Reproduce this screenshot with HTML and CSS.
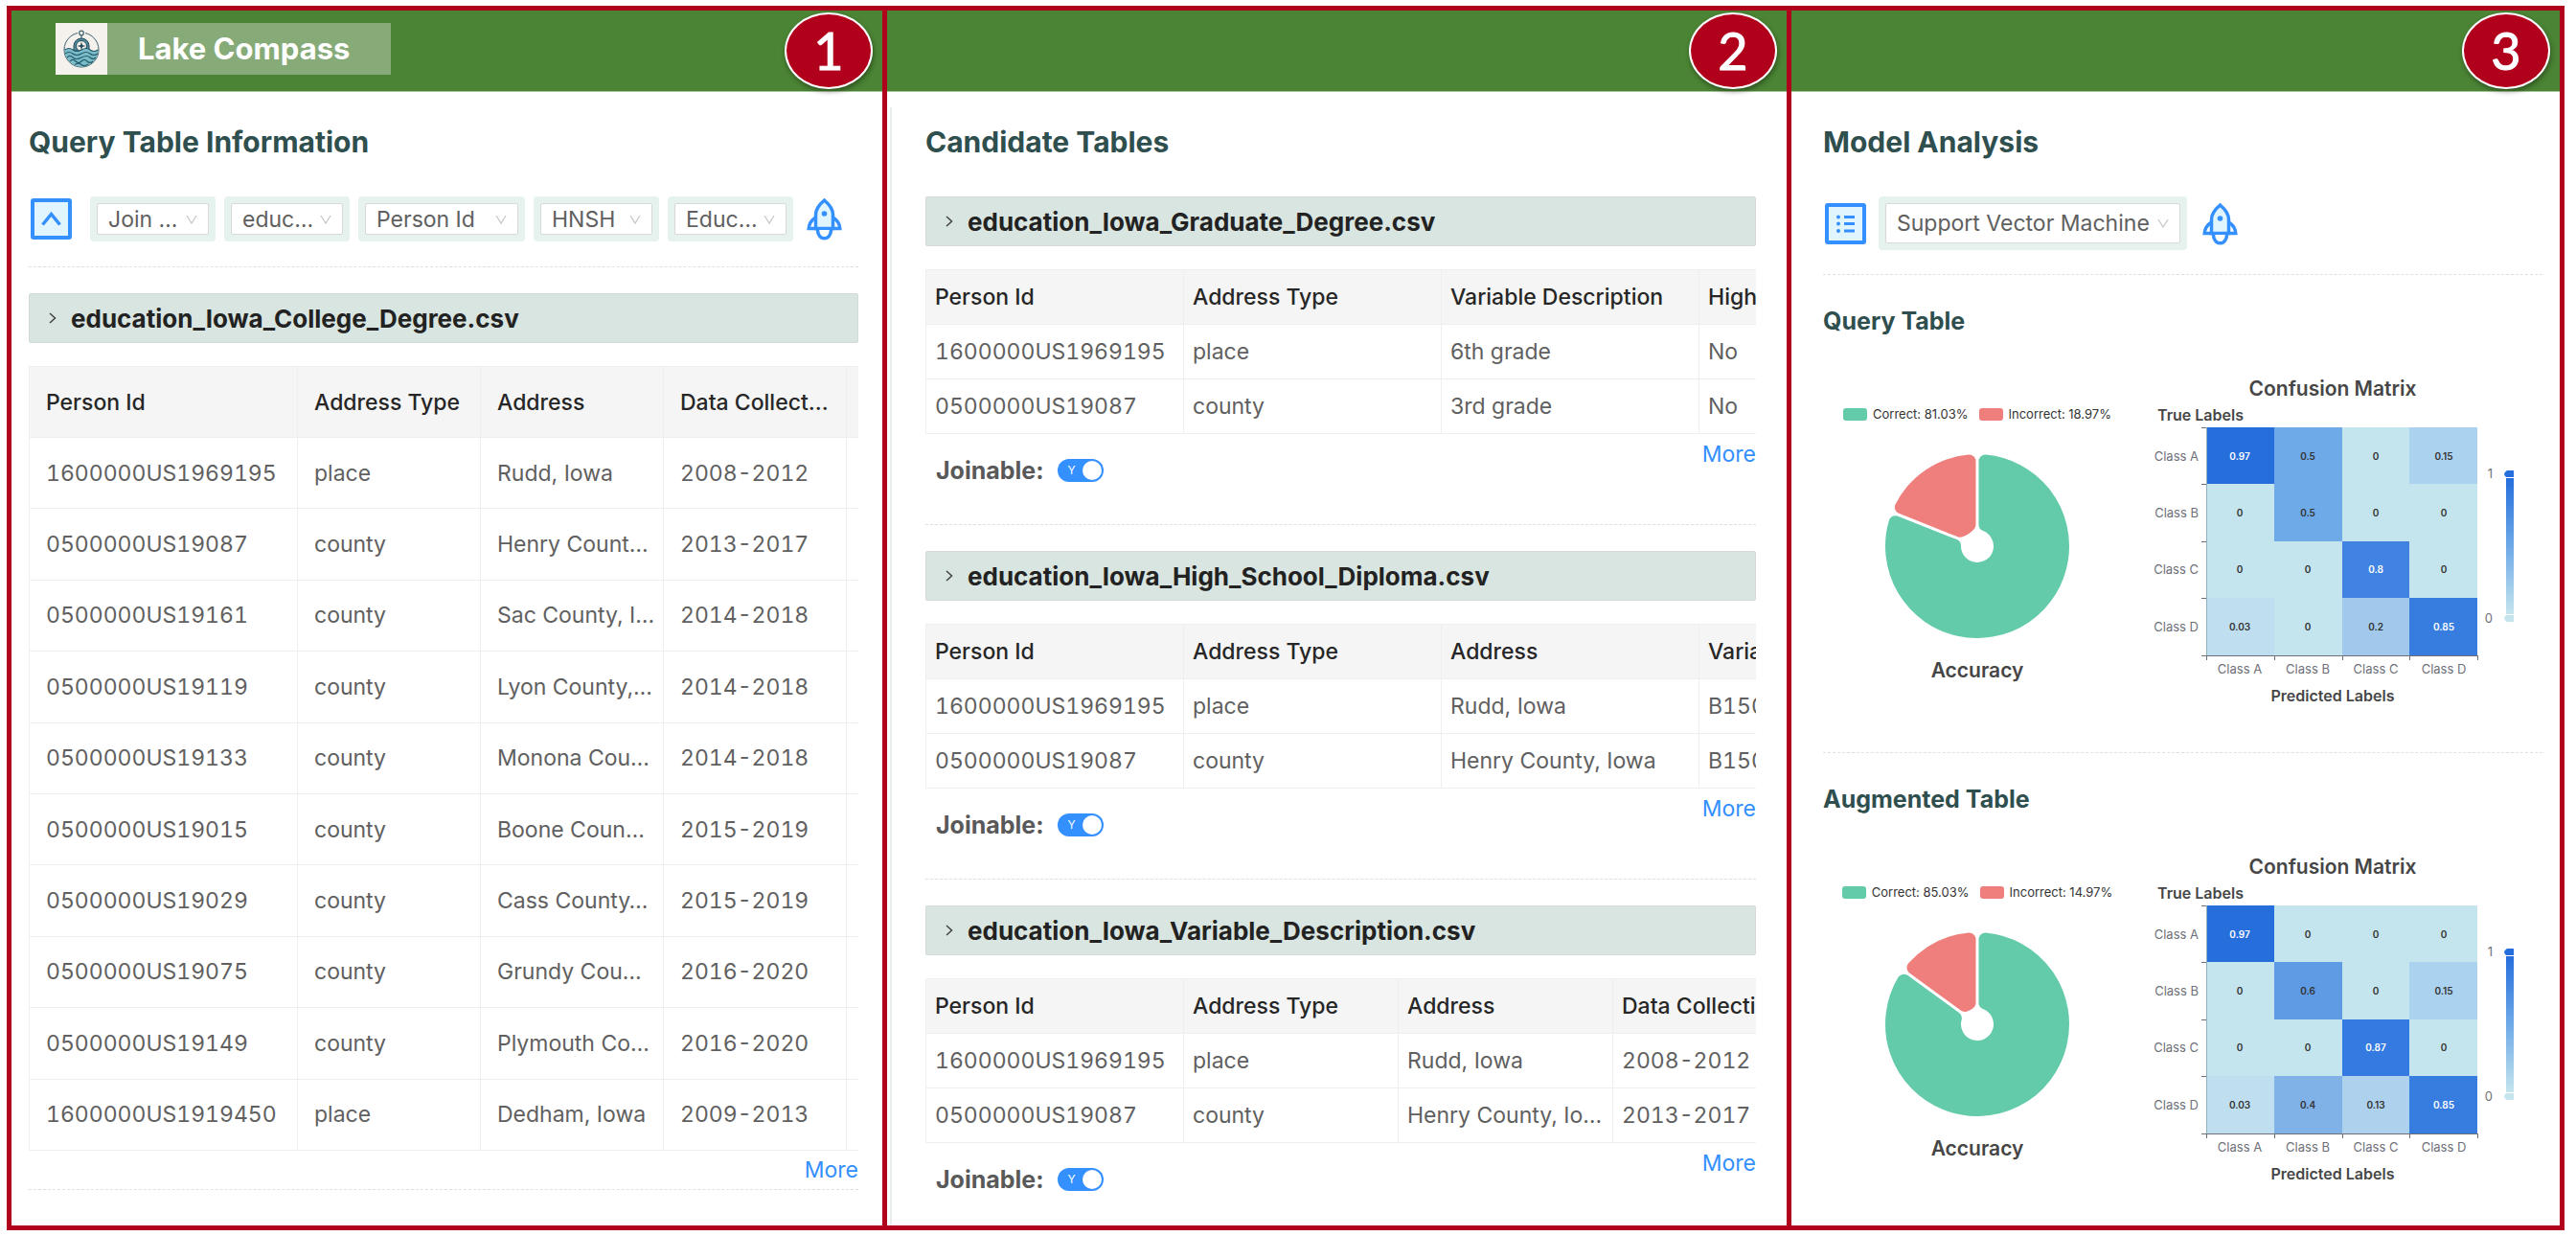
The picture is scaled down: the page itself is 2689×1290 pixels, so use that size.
FILE: index.html
```html
<!DOCTYPE html>
<html lang="en">
<head>
<meta charset="utf-8">
<meta name="viewport" content="width=device-width, initial-scale=1">
<title>Lake Compass</title>
<link rel="stylesheet" href="styles.css">
</head>
<body>
<svg class="defs" aria-hidden="true">
  <defs>
    <symbol id="rocket" viewBox="0 0 37 45">
      <path d="M9.5 21C4.5 24 2.5 28 2.2 32.5H34.8C34.5 28 32.500 24 27.500 21" fill="#fff" stroke="#348fff" stroke-width="3.500"/>
      <path d="M18.500 3C12 8.500 9.500 13.500 9.500 18V32.500H27.500V18C27.500 13.500 25 8.500 18.500 3Z" fill="#e0f5fe" stroke="#348fff" stroke-width="3.500"/>
      <path d="M11.500 34C11.500 39 14.500 42.800 18.500 42.800S25.500 39 25.500 34" fill="#fff" stroke="#348fff" stroke-width="3.500"/>
      <circle cx="18.500" cy="17" r="2.800" fill="#348fff"/>
    </symbol>
    <symbol id="down" viewBox="0 0 12 12"><path d="M1 2 6 10 11 2" fill="none" stroke="#c8c8c8" stroke-width="1.300"/></symbol>
    <symbol id="right" viewBox="0 0 8 12"><path d="M1 1 6.500 6 1 11" fill="none" stroke="#444" stroke-width="1.500"/></symbol>
    <linearGradient id="scale" x1="0" y1="0" x2="0" y2="1">
      <stop offset="0" stop-color="#266edc"/><stop offset=".5" stop-color="#6ea9e8"/><stop offset="1" stop-color="#c4e5ee"/>
    </linearGradient>
    <g id="axes">
      <path d="M64.500 57V295" stroke="#8fb3bd"/>
      <path d="M59 57.500H64M59 116.500H64M59 176.500H64M59 235.500H64M59 295.500H347.500M64.500 295V300M135.500 295V300M206.500 295V300M276.500 295V300M347.500 295V300" stroke="#6e7079"/>
      <rect x="377" y="110" width="8" height="142" fill="url(#scale)"/>
      <path d="M385 102V109H377Q375 107 375 105.500T378 102Z" fill="#266edc"/>
      <path d="M385 260V253H377Q375 255 375 256.500T378 260Z" fill="#c4e5ee"/>
    </g>
  </defs>
</svg>
<main class="frame">
  <section class="panel">
    <header class="bar">
      <div class="brand">
        <svg class="logo" viewBox="0 0 54 54" aria-hidden="true">
          <rect width="54" height="54" fill="#f5f1ec"/>
          <circle cx="27" cy="28" r="18" fill="none" stroke="#3f6470" stroke-width="1"/>
          <path d="M23 8H31V14H23Z" fill="#f5f1ec"/>
          <circle cx="27" cy="10.500" r="2.300" fill="none" stroke="#3f6470" stroke-width="1.200"/>
          <path d="M27 13V17" stroke="#3f6470" stroke-width="1.200"/>
          <path d="M19 29V24a8 8 0 0 1 16 0V29Z" fill="#4f8c9b" stroke="#24495a"/>
          <circle cx="27" cy="24" r="5.500" fill="#f5f1ec" stroke="#24495a"/>
          <path d="M27 19.500 28 23 31.500 24 28 25 27 28.500 26 25 22.500 24 26 23Z" fill="#24495a"/>
          <path d="M9.500 28Q14 25 18 28T27 28T36 28T44.500 28A17.500 17.500 0 0 1 9.500 28Z" fill="#79bcc8"/>
          <path d="M9.500 28Q14 25 18 28T27 28T36 28T44.500 28M10 32Q14 29 18 32T27 32T36 32T44 32M12 36Q15 33 18 36T27 36T36 36T42 36M15 40Q18 37 21 40T27 40T33 40T39 40M20 43.500Q24 41 27 43.500T34 43" fill="none" stroke="#24586b" stroke-width="1.200"/>
        </svg>
        <h1 class="brand-name">Lake Compass</h1>
      </div>
      <span class="badge">1</span>
    </header>
    <div class="body">
      <h2>Query Table Information</h2>
      <div class="tools">
        <button class="icon-btn" type="button" aria-label="Collapse">
          <svg width="43" height="43" viewBox="0 0 43 43"><rect x="2" y="2" width="39" height="39" rx="1" fill="#e0f5fe" stroke="#348fff" stroke-width="4"/><path d="M12.500 27.500 21.500 16.500 30.500 27.500" fill="none" stroke="#348fff" stroke-width="3.500"/></svg>
        </button>
        <div class="selects">
          <span class="pick"><select aria-label="Task"><option>Join …</option></select><svg><use href="#down"/></svg></span>
          <span class="pick"><select aria-label="Query table"><option>educ…</option></select><svg><use href="#down"/></svg></span>
          <span class="pick wide"><select aria-label="Query column"><option>Person Id</option></select><svg><use href="#down"/></svg></span>
          <span class="pick"><select aria-label="Index"><option>HNSH</option></select><svg><use href="#down"/></svg></span>
          <span class="pick"><select aria-label="Target"><option>Educ…</option></select><svg><use href="#down"/></svg></span>
        </div>
        <button class="icon-btn" type="button" aria-label="Run search"><svg width="37" height="45"><use href="#rocket"/></svg></button>
      </div>
      <hr class="after-tools">
      <button class="file" type="button"><svg><use href="#right"/></svg>education_Iowa_College_Degree.csv</button>
      <div class="clip">
        <table class="grid query">
          <colgroup><col class="c280"><col class="c191"><col class="c191"><col class="c191"><col class="c191"></colgroup>
          <thead><tr><th>Person Id</th><th>Address Type</th><th>Address</th><th>Data Collect…</th><th></th></tr></thead>
          <tbody>
            <tr><td class="num">1600000US1969195</td><td>place</td><td>Rudd, Iowa</td><td class="num">2008-2012</td><td></td></tr>
            <tr><td class="num">0500000US19087</td><td>county</td><td>Henry Count…</td><td class="num">2013-2017</td><td></td></tr>
            <tr><td class="num">0500000US19161</td><td>county</td><td>Sac County, I…</td><td class="num">2014-2018</td><td></td></tr>
            <tr><td class="num">0500000US19119</td><td>county</td><td>Lyon County,…</td><td class="num">2014-2018</td><td></td></tr>
            <tr><td class="num">0500000US19133</td><td>county</td><td>Monona Cou…</td><td class="num">2014-2018</td><td></td></tr>
            <tr><td class="num">0500000US19015</td><td>county</td><td>Boone Coun…</td><td class="num">2015-2019</td><td></td></tr>
            <tr><td class="num">0500000US19029</td><td>county</td><td>Cass County…</td><td class="num">2015-2019</td><td></td></tr>
            <tr><td class="num">0500000US19075</td><td>county</td><td>Grundy Cou…</td><td class="num">2016-2020</td><td></td></tr>
            <tr><td class="num">0500000US19149</td><td>county</td><td>Plymouth Co…</td><td class="num">2016-2020</td><td></td></tr>
            <tr><td class="num">1600000US1919450</td><td>place</td><td>Dedham, Iowa</td><td class="num">2009-2013</td><td></td></tr>
          </tbody>
        </table>
      </div>
      <div class="more-row"><a class="more" href="#more">More</a></div>
      <hr>
    </div>
  </section>

  <section class="panel">
    <header class="bar"><span class="badge">2</span></header>
    <div class="body candidates">
      <h2>Candidate Tables</h2>
      <article class="card">
        <button class="file" type="button"><svg><use href="#right"/></svg>education_Iowa_Graduate_Degree.csv</button>
        <div class="clip">
          <table class="grid small">
            <colgroup><col class="c269"><col class="c269"><col class="c269"><col class="c269"></colgroup>
            <thead><tr><th>Person Id</th><th>Address Type</th><th>Variable Description</th><th>High School</th></tr></thead>
            <tbody>
              <tr><td class="num">1600000US1969195</td><td>place</td><td>6th grade</td><td>No</td></tr>
              <tr><td class="num">0500000US19087</td><td>county</td><td>3rd grade</td><td>No</td></tr>
            </tbody>
          </table>
        </div>
        <footer class="foot">
          <label class="join">Joinable: <span class="switch"><input type="checkbox" checked><span class="track">Y</span></span></label>
          <a class="more" href="#more">More</a>
        </footer>
        <hr>
      </article>
      <article class="card">
        <button class="file" type="button"><svg><use href="#right"/></svg>education_Iowa_High_School_Diploma.csv</button>
        <div class="clip">
          <table class="grid small">
            <colgroup><col class="c269"><col class="c269"><col class="c269"><col class="c269"></colgroup>
            <thead><tr><th>Person Id</th><th>Address Type</th><th>Address</th><th>Variable</th></tr></thead>
            <tbody>
              <tr><td class="num">1600000US1969195</td><td>place</td><td>Rudd, Iowa</td><td class="num">B15003</td></tr>
              <tr><td class="num">0500000US19087</td><td>county</td><td>Henry County, Iowa</td><td class="num">B15003</td></tr>
            </tbody>
          </table>
        </div>
        <footer class="foot">
          <label class="join">Joinable: <span class="switch"><input type="checkbox" checked><span class="track">Y</span></span></label>
          <a class="more" href="#more">More</a>
        </footer>
        <hr>
      </article>
      <article class="card">
        <button class="file" type="button"><svg><use href="#right"/></svg>education_Iowa_Variable_Description.csv</button>
        <div class="clip">
          <table class="grid small">
            <colgroup><col class="c269"><col class="c224"><col class="c224"><col class="c360"></colgroup>
            <thead><tr><th>Person Id</th><th>Address Type</th><th>Address</th><th>Data Collection</th></tr></thead>
            <tbody>
              <tr><td class="num">1600000US1969195</td><td>place</td><td>Rudd, Iowa</td><td class="num">2008-2012</td></tr>
              <tr><td class="num">0500000US19087</td><td>county</td><td>Henry County, Io…</td><td class="num">2013-2017</td></tr>
            </tbody>
          </table>
        </div>
        <footer class="foot">
          <label class="join">Joinable: <span class="switch"><input type="checkbox" checked><span class="track">Y</span></span></label>
          <a class="more" href="#more">More</a>
        </footer>
      </article>
    </div>
  </section>

  <section class="panel">
    <header class="bar"><span class="badge">3</span></header>
    <div class="body analysis">
      <h2>Model Analysis</h2>
      <div class="tools">
        <button class="icon-btn" type="button" aria-label="Models">
          <svg width="43" height="43" viewBox="0 0 43 43"><rect x="2" y="2" width="39" height="39" rx="1" fill="#e0f5fe" stroke="#348fff" stroke-width="4"/><path d="M20 14.500H31M20 21.500H31M20 29H31" stroke="#348fff" stroke-width="3"/><g fill="#348fff"><circle cx="14" cy="14.500" r="2"/><circle cx="14" cy="21.500" r="2"/><circle cx="14" cy="29" r="2"/></g></svg>
        </button>
        <span class="pick model"><select aria-label="Model"><option>Support Vector Machine</option></select><svg><use href="#down"/></svg></span>
        <button class="icon-btn" type="button" aria-label="Run model"><svg width="37" height="45"><use href="#rocket"/></svg></button>
      </div>
      <hr>
      <section class="result">
        <h3>Query Table</h3>
        <div class="charts">
          <figure class="accuracy">
            <div class="legend"><span class="key"><i class="sw ok"></i>Correct: 81.03%</span><span class="key"><i class="sw bad"></i>Incorrect: 18.97%</span></div>
            <svg class="pie" viewBox="-100 -100 200 200" role="img" aria-label="Accuracy 81.03%">
              <path class="p-ok" d="M8.500-22.440V-88.590A89 89 0 1 1-85.450-24.850L-23.990-.400A24 24 0 1 0 8.500-22.440Z"/>
              <path class="p-bad" d="M-8.500-22.440V-88.590A89 89 0 0 0-79.170-40.650L-17.710-16.200A24 24 0 0 0-8.500-22.440Z"/>
            </svg>
            <figcaption>Accuracy</figcaption>
          </figure>
          <svg class="matrix" viewBox="0 0 400 355" role="img" aria-label="Confusion matrix of the query table">
            <text class="m-title" x="196" y="24">Confusion Matrix</text>
            <text class="m-axis start" x="13" y="50">True Labels</text>
            <rect x="64" y="57" width="283" height="238" fill="#c4e5ee"/>
            <rect x="64" y="57" width="71" height="59" fill="#266edc"/>
            <rect x="135" y="57" width="71" height="119" fill="#6ea9e8"/>
            <rect x="276" y="57" width="71" height="59" fill="#abd2ef"/>
            <rect x="206" y="176" width="70" height="59" fill="#4083e2"/>
            <rect x="64" y="235" width="71" height="60" fill="#bfdff0"/>
            <rect x="206" y="235" width="70" height="60" fill="#a2c9eb"/>
            <rect x="276" y="235" width="71" height="60" fill="#377de0"/>
            <use href="#axes"/>
            <g class="m-val">
              <text class="hi" x="99" y="91">0.97</text><text x="170" y="91">0.5</text><text x="241" y="91">0</text><text x="312" y="91">0.15</text>
              <text x="99" y="150">0</text><text x="170" y="150">0.5</text><text x="241" y="150">0</text><text x="312" y="150">0</text>
              <text x="99" y="209">0</text><text x="170" y="209">0</text><text class="hi" x="241" y="209">0.8</text><text x="312" y="209">0</text>
              <text x="99" y="269">0.03</text><text x="170" y="269">0</text><text x="241" y="269">0.2</text><text class="hi" x="312" y="269">0.85</text>
            </g>
            <g class="m-lab end"><text x="56" y="92">Class A</text><text x="56" y="151">Class B</text><text x="56" y="210">Class C</text><text x="56" y="270">Class D</text></g>
            <g class="m-lab mid"><text x="99" y="314">Class A</text><text x="170" y="314">Class B</text><text x="241" y="314">Class C</text><text x="312" y="314">Class D</text></g>
            <g class="m-lab end"><text x="363" y="110">1</text><text x="363" y="261">0</text></g>
            <text class="m-axis mid" x="196" y="343">Predicted Labels</text>
          </svg>
        </div>
        <hr>
      </section>
      <section class="result">
        <h3>Augmented Table</h3>
        <div class="charts">
          <figure class="accuracy">
            <div class="legend"><span class="key"><i class="sw ok"></i>Correct: 85.03%</span><span class="key"><i class="sw bad"></i>Incorrect: 14.97%</span></div>
            <svg class="pie" viewBox="-100 -100 200 200" role="img" aria-label="Accuracy 85.03%">
              <path class="p-ok" d="M8.500-22.440V-88.590A89 89 0 1 1-76.580-45.340L-23.140-6.350A24 24 0 1 0 8.500-22.440Z"/>
              <path class="p-bad" d="M-8.500-22.440V-88.590A89 89 0 0 0-66.560-59.080L-13.120-20.090A24 24 0 0 0-8.500-22.440Z"/>
            </svg>
            <figcaption>Accuracy</figcaption>
          </figure>
          <svg class="matrix" viewBox="0 0 400 355" role="img" aria-label="Confusion matrix of the augmented table">
            <text class="m-title" x="196" y="24">Confusion Matrix</text>
            <text class="m-axis start" x="13" y="50">True Labels</text>
            <rect x="64" y="57" width="283" height="238" fill="#c4e5ee"/>
            <rect x="64" y="57" width="71" height="59" fill="#266edc"/>
            <rect x="135" y="116" width="71" height="60" fill="#5f9ae5"/>
            <rect x="276" y="116" width="71" height="60" fill="#abd2ef"/>
            <rect x="206" y="176" width="70" height="59" fill="#347ae0"/>
            <rect x="64" y="235" width="71" height="60" fill="#bfdff0"/>
            <rect x="135" y="235" width="71" height="60" fill="#80b2e8"/>
            <rect x="206" y="235" width="70" height="60" fill="#aed2ee"/>
            <rect x="276" y="235" width="71" height="60" fill="#377de0"/>
            <use href="#axes"/>
            <g class="m-val">
              <text class="hi" x="99" y="91">0.97</text><text x="170" y="91">0</text><text x="241" y="91">0</text><text x="312" y="91">0</text>
              <text x="99" y="150">0</text><text x="170" y="150">0.6</text><text x="241" y="150">0</text><text x="312" y="150">0.15</text>
              <text x="99" y="209">0</text><text x="170" y="209">0</text><text class="hi" x="241" y="209">0.87</text><text x="312" y="209">0</text>
              <text x="99" y="269">0.03</text><text x="170" y="269">0.4</text><text x="241" y="269">0.13</text><text class="hi" x="312" y="269">0.85</text>
            </g>
            <g class="m-lab end"><text x="56" y="92">Class A</text><text x="56" y="151">Class B</text><text x="56" y="210">Class C</text><text x="56" y="270">Class D</text></g>
            <g class="m-lab mid"><text x="99" y="314">Class A</text><text x="170" y="314">Class B</text><text x="241" y="314">Class C</text><text x="312" y="314">Class D</text></g>
            <g class="m-lab end"><text x="363" y="110">1</text><text x="363" y="261">0</text></g>
            <text class="m-axis mid" x="196" y="343">Predicted Labels</text>
          </svg>
        </div>
      </section>
    </div>
  </section>
</main>
</body>
</html>
```
FILE: styles.css
```css
:root {
  --red: #b1001c;
  --blue: #348fff;
  --line: #efefef;
  --mint: #d9e5e0;
}
* { box-sizing: border-box; }
body {
  margin: 0;
  padding: 6px 12px 6px 7px;
  background: #fff;
  color: #606060;
  font-family: Inter, "Liberation Sans", sans-serif;
  font-size: 23px;
}
h1, h2, h3, figure { margin: 0; }
button, select { font: inherit; color: inherit; }
.defs { position: absolute; width: 0; height: 0; }

.frame {
  display: grid;
  grid-template-columns: minmax(0, 914fr) minmax(0, 944fr) minmax(0, 802fr);
  min-height: calc(100vh - 12px);
  border: 5px solid var(--red);
}
.panel { display: flex; flex-direction: column; border-right: 5px solid var(--red); }
.panel:last-child { border-right: 0; }

.bar {
  display: flex;
  align-items: center;
  height: 85px;
  padding: 0 10px 0 46px;
  background: #4a8434;
  border-bottom: 1px solid #a9c79d;
}
.brand { display: flex; align-self: flex-start; margin-top: 13px; background: #86ab78; }
.logo { width: 54px; height: 54px; }
.brand-name { padding: 0 43px 0 32px; color: #fff; font-size: 31px; line-height: 54px; font-weight: 700; }
.badge {
  width: 92px;
  height: 80px;
  margin-left: auto;
  border: 2px solid #fff;
  border-radius: 50%;
  background: var(--red);
  box-shadow: 1px 3px 5px rgba(0, 0, 0, .35);
  color: #fff;
  font: 400 54px/76px Lato, sans-serif;
  text-align: center;
  -webkit-text-stroke: 1px #fff;
}

.body { flex: 1; padding: 34px 25px 16px 18px; }
.candidates { margin: 16px 0 0 3px; border-left: 2px solid #e5efec; padding: 18px 32px 0 35px; }
.analysis { padding: 34px 18px 0 33px; }
h2 { margin-bottom: 39px; color: #2f4f4f; font-size: 30px; line-height: 36px; font-weight: 700; }
h3 { color: #2f4f4f; font-size: 25px; line-height: 30px; font-weight: 700; }
hr { margin: 0; border: 0; border-top: 1px dashed #d9e3e0; }

.tools { display: flex; align-items: center; padding-left: 2px; margin-bottom: 26px; }
.selects { display: flex; gap: 9px; margin: 0 14px 0 19px; }
.icon-btn { padding: 0; border: 0; background: none; }
.icon-btn svg { display: block; }
.pick { display: grid; width: 131px; height: 47px; padding: 7px; border-radius: 4px; background: #e6f2ee; }
.pick.wide { width: 174px; }
.pick.model { width: 322px; height: 56px; margin: 0 16px 0 13px; }
.pick select {
  grid-area: 1 / 1;
  width: 100%;
  padding: 0 0 0 11px;
  border: 1px solid #d9d9d9;
  border-radius: 2px;
  background: #fff;
  appearance: none;
}
.pick svg { grid-area: 1 / 1; place-self: center end; width: 12px; height: 12px; margin-right: 12px; pointer-events: none; }
.after-tools { margin-bottom: 27px; }
.analysis .tools { margin-bottom: 25px; }

.file {
  display: flex;
  align-items: center;
  gap: 15px;
  width: 100%;
  height: 52px;
  margin-bottom: 24px;
  padding: 0 20px;
  border: 1px solid #d3dad7;
  border-radius: 2px;
  background: var(--mint);
  color: #222;
  font-size: 26px;
  font-weight: 700;
}
.file svg { width: 8px; height: 12px; }

.clip { overflow: hidden; }
.grid { table-layout: fixed; border-collapse: separate; border-spacing: 0; border-top: 1px solid var(--line); border-left: 1px solid var(--line); }
.grid th, .grid td {
  padding: 0 0 0 17px;
  border-right: 1px solid var(--line);
  border-bottom: 1px solid var(--line);
  text-align: left;
  white-space: nowrap;
}
.grid th { height: 74px; background: #f5f5f5; color: #262626; font-weight: 500; }
.grid .num { font-variant-numeric: tabular-nums; }
.query { width: 1044px; height: 819px; }
.small { width: 1077px; height: 172px; }
.small th, .small td { height: 57px; padding-left: 9px; }
.c280 { width: 280px; }
.c191 { width: 191px; }
.c269 { width: 269px; }
.c224 { width: 224px; }
.c360 { width: 360px; }

.more { color: var(--blue); text-decoration: none; }
.more-row { line-height: 40px; text-align: right; }
.foot { display: flex; justify-content: space-between; height: 94px; line-height: 42px; }
.card:last-child .foot { height: 60px; }
.join { display: flex; align-items: center; gap: 14px; height: 36px; margin: 20px 0 0 11px; color: #595959; font-size: 25px; font-weight: 700; }
.switch { display: grid; }
.switch input { grid-area: 1 / 1; width: 48px; height: 24px; margin: 0; opacity: 0; }
.track {
  grid-area: 1 / 1;
  display: flex;
  align-items: center;
  justify-content: space-between;
  width: 48px;
  height: 24px;
  padding: 0 2px 0 11px;
  border-radius: 12px;
  background: var(--blue);
  color: #fff;
  font-size: 12px;
  font-weight: 400;
  pointer-events: none;
}
.track::after { content: ""; width: 20px; height: 20px; border-radius: 50%; background: #fff; }
.card hr { margin-bottom: 27px; }

.result { padding-top: 33px; }
.charts { display: flex; gap: 14px; margin: 39px 0 41px; }
.result:last-child .charts { margin-bottom: 0; }
.accuracy { display: flex; flex-direction: column; align-items: center; width: 322px; padding-top: 33px; }
.legend { display: flex; gap: 11px; color: #333; font-size: 13px; line-height: 20px; }
.key { display: flex; align-items: center; gap: 6px; }
.sw { width: 25px; height: 13px; border-radius: 3px; }
.ok { background: #63caaa; }
.bad { background: #ef7f7c; }
.pie { width: 200px; height: 200px; margin: 28px 0 16px; stroke-width: 14px; stroke-linejoin: round; }
.p-ok { fill: #63caaa; stroke: #63caaa; }
.p-bad { fill: #ef7f7c; stroke: #ef7f7c; }
figcaption { color: #464646; font-size: 21px; line-height: 28px; font-weight: 600; }
.matrix { width: 400px; height: 355px; }
.m-title { fill: #464646; font-size: 21px; font-weight: 600; text-anchor: middle; }
.m-axis { fill: #464646; font-size: 16px; font-weight: 600; }
.m-val { fill: #333; font-size: 10px; font-weight: 600; text-anchor: middle; }
.m-val .hi { fill: #fff; }
.m-lab { fill: #6e7079; font-size: 13px; }
.start { text-anchor: start; }
.mid { text-anchor: middle; }
.end { text-anchor: end; }
```
